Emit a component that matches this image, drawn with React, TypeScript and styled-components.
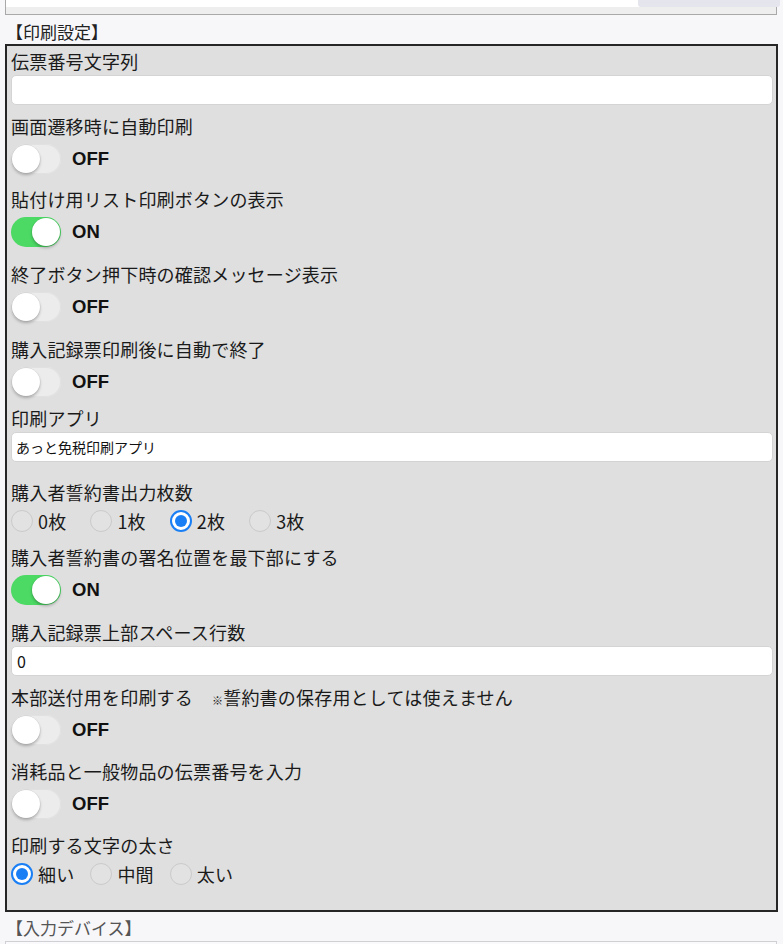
import React, { ReactNode, useState } from 'react';
import styled, { createGlobalStyle } from 'styled-components';

const GlobalStyle = createGlobalStyle`
  html, body {
    margin: 0;
    padding: 0;
    background: #f7f7fa;
  }

  body {
    font-family: "Noto Sans CJK JP", "Noto Sans", sans-serif;
    color: #1a1a1a;
  }
`;

const Page = styled.div`
  position: relative;
  width: 783px;
  height: 944px;
  overflow: hidden;
  padding: 0 5px;
  box-sizing: border-box;
`;

const ScrollTab = styled.div`
  position: absolute;
  top: 0;
  left: 638px;
  width: 142px;
  height: 7px;
  border-radius: 0 0 3px 3px;
  background: #e5e5ee;
`;

const PrevSectionEnd = styled.div`
  height: 15px;
  margin-right: 1px;
  box-sizing: border-box;
  border: 1px solid #a9a9a9;
  border-top: none;
  background: linear-gradient(#ffffff 0 7px, #eeeeef 7px);
`;

const SectionTitle = styled.div<{ $muted?: boolean }>`
  padding: ${(p) => (p.$muted ? '2px 0 0 1px' : '4px 0 0 1px')};
  font-size: 17px;
  line-height: ${(p) => (p.$muted ? '27px' : '25px')};
  color: ${(p) => (p.$muted ? '#555' : '#222')};
`;

const Panel = styled.div`
  border: 2px solid #262626;
  background: #dfdfdf;
  padding: 3px 3px 10px 4px;
`;

const NextSectionStart = styled.div`
  height: 10px;
  margin-right: 1px;
  border: 1px solid #cfcfd4;
  border-bottom: none;
  background: #fafafc;
`;

const Field = styled.div<{ $after: number }>`
  margin-bottom: ${(p) => p.$after}px;
`;

const Label = styled.div`
  height: 24px;
  font-size: 18px;
  line-height: 24px;
  letter-spacing: 0.2px;
  white-space: nowrap;
`;

const Mark = styled.span`
  margin-left: 19px;
  font-size: 11px;
`;

const TextBox = styled.input`
  display: block;
  width: 100%;
  height: 30px;
  margin-top: 2px;
  box-sizing: border-box;
  padding: 0 5px;
  border: 1px solid #d4d4d4;
  border-radius: 5px;
  background: #fff;
  font-family: "Noto Sans CJK JP", "Noto Sans", sans-serif;
  font-size: 16px;
  color: #111;
  outline: none;
`;

const SelectBox = styled.div`
  display: flex;
  align-items: center;
  height: 30px;
  margin-top: 2px;
  box-sizing: border-box;
  padding: 0 5px 0 4px;
  border: 1px solid #d4d4d4;
  border-radius: 5px;
  background: #fff;
  font-size: 14px;
  color: #111;
`;

const ToggleRow = styled.label`
  display: flex;
  align-items: center;
  gap: 11px;
  height: 30px;
  margin-top: 6px;
  cursor: pointer;
`;

const Track = styled.span<{ $on: boolean }>`
  position: relative;
  display: block;
  width: 50px;
  height: 30px;
  border-radius: 15px;
  background: ${(p) => (p.$on ? '#4cd964' : '#ececec')};
  box-shadow: ${(p) => (p.$on ? 'none' : 'inset 0 0 0 1px #e1e1e1')};
`;

const Knob = styled.span<{ $on: boolean }>`
  position: absolute;
  top: 1px;
  left: ${(p) => (p.$on ? '21px' : '1px')};
  width: 28px;
  height: 28px;
  border-radius: 50%;
  background: #fff;
  box-shadow: 0 2px 3px rgba(0, 0, 0, 0.25), 0 0 0 0.5px rgba(0, 0, 0, 0.08);
`;

const ToggleText = styled.span`
  font-family: "Liberation Sans", Arial, sans-serif;
  font-weight: bold;
  font-size: 18.5px;
  color: #111;
`;

const RadioRow = styled.div`
  display: flex;
  height: 22px;
  margin-top: 6px;
`;

const RadioOption = styled.label`
  display: flex;
  align-items: center;
  gap: 5px;
  width: 79.4px;
  cursor: pointer;
`;

const RadioCircle = styled.span<{ $checked: boolean }>`
  display: flex;
  align-items: center;
  justify-content: center;
  width: 22px;
  height: 22px;
  box-sizing: border-box;
  border-radius: 50%;
  border: ${(p) => (p.$checked ? '2px solid #1a7ff5' : '1px solid #cacaca')};
  background: ${(p) => (p.$checked ? '#fff' : '#e2e2e2')};

  &::after {
    content: '';
    display: ${(p) => (p.$checked ? 'block' : 'none')};
    width: 12px;
    height: 12px;
    border-radius: 50%;
    background: #1a7ff5;
  }
`;

const RadioText = styled.span`
  font-size: 18px;
  line-height: 22px;
  letter-spacing: 0.2px;
  white-space: nowrap;
`;

type ToggleProps = { label: ReactNode; initial: boolean; after?: number };

const ToggleField = ({ label, initial, after = 15 }: ToggleProps) => {
  const [on, setOn] = useState(initial);
  return (
    <Field $after={after}>
      <Label>{label}</Label>
      <ToggleRow onClick={() => setOn(!on)}>
        <Track $on={on}>
          <Knob $on={on} />
        </Track>
        <ToggleText>{on ? 'ON' : 'OFF'}</ToggleText>
      </ToggleRow>
    </Field>
  );
};

type RadioProps = {
  label: string;
  options: string[];
  initial: number;
  after?: number;
};

const RadioField = ({ label, options, initial, after = 13 }: RadioProps) => {
  const [selected, setSelected] = useState(initial);
  return (
    <Field $after={after}>
      <Label>{label}</Label>
      <RadioRow>
        {options.map((option, i) => (
          <RadioOption key={option} onClick={() => setSelected(i)}>
            <RadioCircle $checked={selected === i} />
            <RadioText>{option}</RadioText>
          </RadioOption>
        ))}
      </RadioRow>
    </Field>
  );
};

export default function App() {
  const [slipText, setSlipText] = useState('');
  const [topLines, setTopLines] = useState('0');

  return (
    <Page>
      <GlobalStyle />
      <ScrollTab />
      <PrevSectionEnd />
      <SectionTitle>【印刷設定】</SectionTitle>
      <Panel>
        <Field $after={9}>
          <Label>伝票番号文字列</Label>
          <TextBox
            value={slipText}
            onChange={(e) => setSlipText(e.target.value)}
          />
        </Field>
        <ToggleField label="画面遷移時に自動印刷" initial={false} after={13} />
        <ToggleField label="貼付け用リスト印刷ボタンの表示" initial={true} />
        <ToggleField label="終了ボタン押下時の確認メッセージ表示" initial={false} />
        <ToggleField label="購入記録票印刷後に自動で終了" initial={false} after={9} />
        <Field $after={18}>
          <Label>印刷アプリ</Label>
          <SelectBox>あっと免税印刷アプリ</SelectBox>
        </Field>
        <RadioField
          label="購入者誓約書出力枚数"
          options={['0枚', '1枚', '2枚', '3枚']}
          initial={2}
        />
        <ToggleField label="購入者誓約書の署名位置を最下部にする" initial={true} />
        <Field $after={9}>
          <Label>購入記録票上部スペース行数</Label>
          <TextBox
            value={topLines}
            onChange={(e) => setTopLines(e.target.value)}
          />
        </Field>
        <ToggleField
          label={
            <>
              本部送付用を印刷する<Mark>※</Mark>誓約書の保存用としては使えません
            </>
          }
          initial={false}
          after={14}
        />
        <ToggleField label="消耗品と一般物品の伝票番号を入力" initial={false} after={14} />
        <RadioField
          label="印刷する文字の太さ"
          options={['細い', '中間', '太い']}
          initial={0}
          after={15}
        />
      </Panel>
      <SectionTitle $muted>【入力デバイス】</SectionTitle>
      <NextSectionStart />
    </Page>
  );
}
